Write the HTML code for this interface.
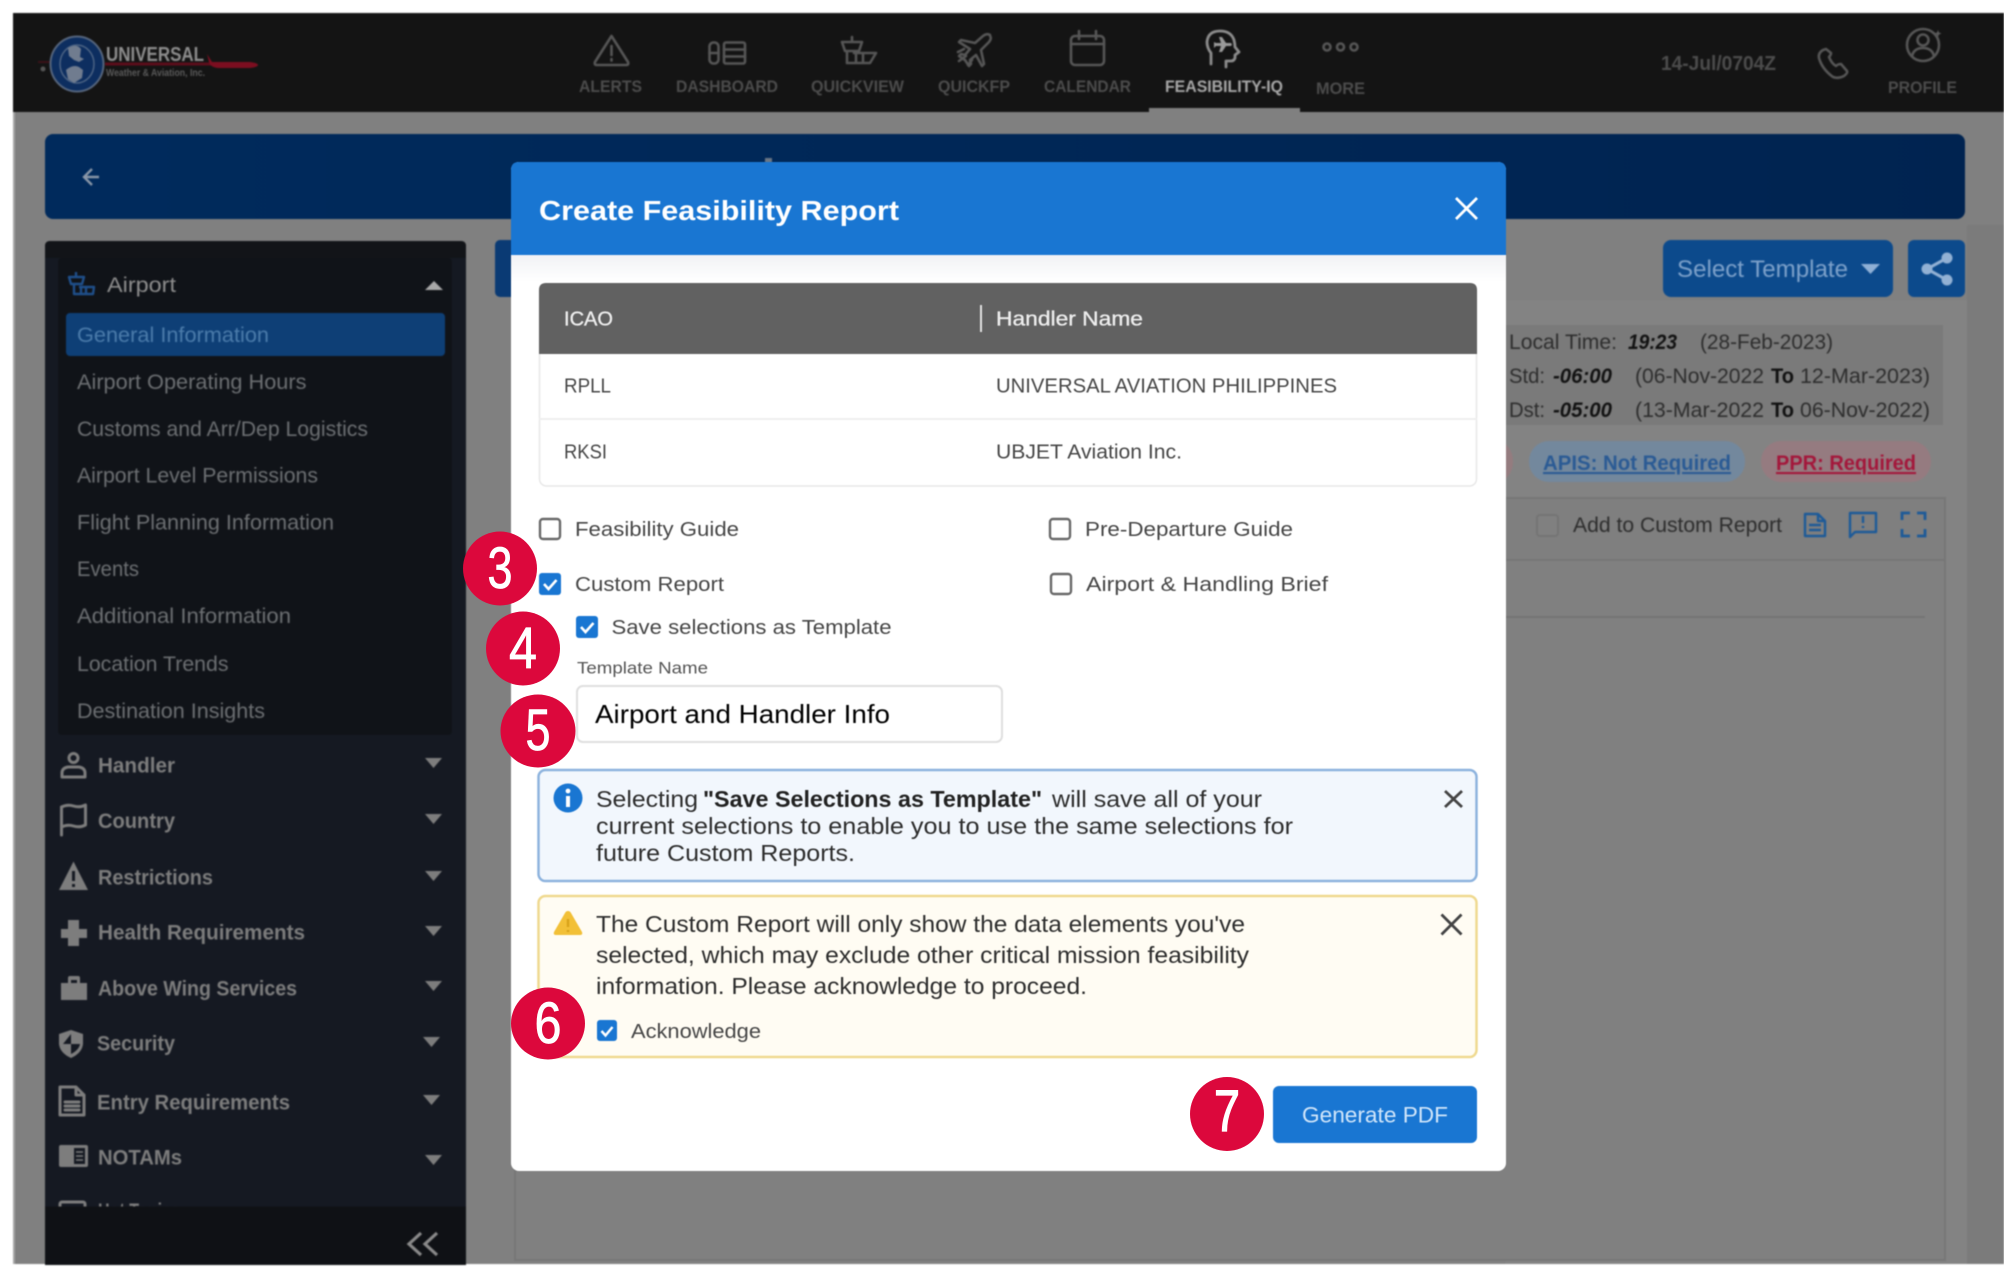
<!DOCTYPE html>
<html lang="en">
<head>
<meta charset="utf-8">
<title>Create Feasibility Report</title>
<style>
html,body{margin:0;padding:0;background:#fff;width:2004px;height:1272px;overflow:hidden}
svg{display:block}
text{font-family:"Liberation Sans",Arial,sans-serif;white-space:pre}
.b1{filter:blur(.9px)}
.b2{filter:blur(.4px)}
.nav{font-size:17px;font-weight:700;fill:#4c4c4c}
.m{font-size:21px;fill:#6d7073}
.s{font-size:21px;fill:#7d7d7d;font-weight:700}
.d{font-size:21px;fill:#2c2c2c}
.db{font-size:21px;fill:#111;font-weight:700;font-style:italic}
.dt{font-size:21px;fill:#111;font-weight:700}
.t{font-size:20px;fill:#474747}
.a{font-size:23px;fill:#2e2e2e}
.n{font-size:58px;fill:#fff;text-anchor:middle;font-family:"Liberation Sans",sans-serif}
.ic{fill:none;stroke:#565656;stroke-width:2.6;stroke-linecap:round;stroke-linejoin:round}
.si{fill:#7d7d7d}
.so{fill:none;stroke:#7d7d7d;stroke-width:3;stroke-linejoin:round;stroke-linecap:round}
</style>
</head>
<body>
<svg xmlns="http://www.w3.org/2000/svg" width="2004" height="1272" viewBox="0 0 2004 1272">
<defs>
<linearGradient id="ban" x1="0" x2="1" y1="0" y2="0"><stop offset="0" stop-color="#002a5c"/><stop offset="1" stop-color="#002350"/></linearGradient>
<linearGradient id="top" x1="0" x2="0" y1="0" y2="1"><stop offset="0" stop-color="#f1f2f5"/><stop offset="1" stop-color="#ffffff"/></linearGradient>
<clipPath id="sc"><rect x="45" y="1100" width="421" height="106.6"/></clipPath>
</defs>

<rect width="2004" height="1272" fill="#fff"/>
<g class="b1">
  <!-- page backdrop -->
  <rect x="13" y="13" width="1991" height="1251" fill="#808080"/>
  <rect x="13" y="13" width="2" height="1251" fill="#a5a5a5"/>
  <rect x="1967" y="225" width="37" height="1039" fill="#7b7b7b"/>
  <rect x="1505" y="300" width="462" height="964" fill="#838383"/>

  <!-- top nav -->
  <rect x="13" y="13" width="1991" height="99" fill="#141414"/>
  <!-- logo -->
  <path d="M38 62h14" stroke="#3a1218" stroke-width="2"/>
  <circle cx="43" cy="69" r="2.5" fill="#555"/>
  <path d="M105 64H230" stroke="#5c0d1b" stroke-width="3"/>
  <path d="M207 54l5 8H250q8 1 8 3t-8 3H218q-8-1-9-6z" fill="#7c0e20"/>
  <ellipse cx="77" cy="64" rx="26.5" ry="27.5" fill="#0d2e60" stroke="#55657d" stroke-width="2"/>
  <ellipse cx="77" cy="64" rx="17" ry="19" fill="none" stroke="#4d6484" stroke-width="1.5"/>
  <path d="M68 48q9-5 13 1l-1 8 4 2-5 3-5-2-5-4zM66 70q7-6 13-3l4 3-1 8-8 5-6-4z" fill="#707c8f"/>
  <text x="106" y="61" font-size="20" font-weight="700" fill="#8d8d8d" textLength="98" lengthAdjust="spacingAndGlyphs">UNIVERSAL</text>
  <text x="106" y="76" font-size="10" font-weight="700" fill="#5a5a5a" textLength="99" lengthAdjust="spacingAndGlyphs">Weather &amp; Aviation, Inc.</text>

  <!-- nav icons -->
  <path class="ic" d="M611.5 36 L628 62q1 3-2 3H597q-3 0-2-3Z"/><path d="M611.5 46v9M611.5 59v1.5" class="ic" stroke-width="3"/>
  <rect class="ic" x="709.5" y="42.5" width="9" height="21" rx="4"/><path class="ic" d="M709.5 53h9"/>
  <rect class="ic" x="724" y="42.5" width="21" height="21" rx="2"/><path class="ic" d="M724 49.5h21M724 56.5h21"/>
  <path class="ic" d="M842 42h20l-3 9h-14zM852 37v5M847 51v12h23l6-10h-22M856 54v9M863 54v9"/>
  <path class="ic" d="M990 35q-3-2-7 1l-8 7-14-3-2 2 11 7-5 6-4-1-2 2 6 4 4 6 2-2-1-4 6-5 6 11 2-2-3-14 8-8q3-4 1-6zM964 49l-6 3M966 56l-7 5M972 60l-4 5"/>
  <rect class="ic" x="1071" y="36" width="33" height="29" rx="4"/><path class="ic" d="M1071 44h33M1079 31v8M1096 31v8"/>
  <path d="M1211 64V53q-4-5-4-11 1-11 13-11 11 0 14 9 1 4 1 7l4 5-4 3v3q-1 3-4 3h-5v6" fill="none" stroke="#8c8c8c" stroke-width="2.8" stroke-linecap="round" stroke-linejoin="round"/>
  <path d="M1216 43h5l-2-6h3l4 6h5l1 1.500-1 1.500h-5l-4 6h-3l2-6h-5l-2 2v-6z" fill="#9a9a9a"/>
  <circle class="ic" cx="1327" cy="47" r="3.500" stroke-width="2.200"/><circle class="ic" cx="1340.500" cy="47" r="3.500" stroke-width="2.200"/><circle class="ic" cx="1354" cy="47" r="3.500" stroke-width="2.200"/>
  <path class="ic" d="M1823 50q-5 3-4 8 3 11 14 19 5 2 11-1 4-3 3-5l-6-7q-3 0-5 2-4-2-7-9 2-2 2-4l-5-4z" stroke="#4a4a4a"/>
  <circle class="ic" cx="1923" cy="45" r="16"/><circle class="ic" cx="1923" cy="40" r="5.500"/><path class="ic" d="M1912 56q2-8 11-8t11 8"/><path d="M1938 30l1 2.500 2.500 1-2.500 1-1 2.500-1-2.500-2.500-1 2.500-1z" fill="#5a5a5a"/>

  <text class="nav" x="579" y="92" textLength="63" lengthAdjust="spacingAndGlyphs">ALERTS</text>
  <text class="nav" x="676" y="92" textLength="102" lengthAdjust="spacingAndGlyphs">DASHBOARD</text>
  <text class="nav" x="811" y="92" textLength="93" lengthAdjust="spacingAndGlyphs">QUICKVIEW</text>
  <text class="nav" x="938" y="92" textLength="72" lengthAdjust="spacingAndGlyphs">QUICKFP</text>
  <text class="nav" x="1044" y="92" textLength="87" lengthAdjust="spacingAndGlyphs">CALENDAR</text>
  <text class="nav" x="1165" y="92" textLength="118" lengthAdjust="spacingAndGlyphs" style="fill:#a8a8a8">FEASIBILITY-IQ</text>
  <text class="nav" x="1316" y="94" textLength="49" lengthAdjust="spacingAndGlyphs">MORE</text>
  <text class="nav" x="1888" y="93" textLength="69" lengthAdjust="spacingAndGlyphs">PROFILE</text>
  <text x="1661" y="70" font-size="20" font-weight="700" fill="#4c4c4c" textLength="115" lengthAdjust="spacingAndGlyphs">14-Jul/0704Z</text>
  <rect x="1149" y="108" width="151" height="5" fill="#808080"/>

  <!-- banner -->
  <rect x="45" y="134" width="1920" height="85" rx="8" fill="url(#ban)"/>
  <rect x="765" y="158" width="7" height="6" fill="#6a7684"/>
  <path d="M99 177H85M92 169l-8 8 8 8" fill="none" stroke="#8a97a8" stroke-width="2.400"/>

  <!-- blue tab behind the modal -->
  <rect x="495" y="240" width="30" height="57" rx="5" fill="#0a3a74"/>

  <!-- main content card -->
  <rect x="515" y="560" width="1430" height="700" fill="#808080" stroke="#767676" stroke-width="2"/>
  <path d="M1505 617H1925" stroke="#747474" stroke-width="2"/>

  <!-- right tools -->
  <rect x="1663" y="240" width="230" height="57" rx="8" fill="#0c4a8c"/>
  <text x="1677" y="277" font-size="24" fill="#7ea2cb" textLength="171" lengthAdjust="spacingAndGlyphs">Select Template</text>
  <path d="M1861 264h19l-9.500 10z" fill="#8fb0d6"/>
  <rect x="1908" y="240" width="57" height="57" rx="6" fill="#0c4a8c"/>
  <g fill="#92b1d4"><circle cx="1947" cy="258" r="5.500"/><circle cx="1927" cy="269" r="5.500"/><circle cx="1947" cy="280" r="5.500"/></g>
  <path d="M1947 258L1927 269L1947 280" fill="none" stroke="#92b1d4" stroke-width="3"/>

  <rect x="1505" y="325" width="438" height="100" fill="#7a7a7a"/>
  <text class="d" x="1509" y="349" textLength="108" lengthAdjust="spacingAndGlyphs">Local Time:</text>
  <text class="db" x="1628" y="349" textLength="49" lengthAdjust="spacingAndGlyphs">19:23</text>
  <text class="d" x="1700" y="349" textLength="133" lengthAdjust="spacingAndGlyphs">(28-Feb-2023)</text>
  <text class="d" x="1509" y="383" textLength="36" lengthAdjust="spacingAndGlyphs">Std:</text>
  <text class="db" x="1553" y="383" textLength="59" lengthAdjust="spacingAndGlyphs">-06:00</text>
  <text class="d" x="1635" y="383" textLength="129" lengthAdjust="spacingAndGlyphs">(06-Nov-2022</text>
  <text class="dt" x="1771" y="383" textLength="23" lengthAdjust="spacingAndGlyphs">To</text>
  <text class="d" x="1800" y="383" textLength="130" lengthAdjust="spacingAndGlyphs">12-Mar-2023)</text>
  <text class="d" x="1509" y="417" textLength="36" lengthAdjust="spacingAndGlyphs">Dst:</text>
  <text class="db" x="1553" y="417" textLength="59" lengthAdjust="spacingAndGlyphs">-05:00</text>
  <text class="d" x="1635" y="417" textLength="129" lengthAdjust="spacingAndGlyphs">(13-Mar-2022</text>
  <text class="dt" x="1771" y="417" textLength="23" lengthAdjust="spacingAndGlyphs">To</text>
  <text class="d" x="1800" y="417" textLength="130" lengthAdjust="spacingAndGlyphs">06-Nov-2022)</text>

  <rect x="1480" y="441" width="33" height="41" rx="20" fill="#947c7f"/>
  <rect x="1529" y="441" width="216" height="41" rx="20" fill="#73889d"/>
  <text x="1543" y="470" font-size="21" font-weight="700" fill="#2a5a94" text-decoration="underline" textLength="188" lengthAdjust="spacingAndGlyphs">APIS: Not Required</text>
  <rect x="1761" y="441" width="170" height="41" rx="20" fill="#957b80"/>
  <text x="1776" y="470" font-size="21" font-weight="700" fill="#a3163a" text-decoration="underline" textLength="140" lengthAdjust="spacingAndGlyphs">PPR: Required</text>

  <rect x="1505" y="498" width="440" height="62" fill="#7f7f7f" stroke="#767676" stroke-width="2"/>
  <rect x="1537" y="515" width="21" height="21" rx="3" fill="#808080" stroke="#747474" stroke-width="2"/>
  <text class="d" x="1573" y="532" textLength="209" lengthAdjust="spacingAndGlyphs">Add to Custom Report</text>
  <path d="M1805 514h13l7 7v15h-20zM1818 514v7h7M1809 525h12M1809 530h12" fill="none" stroke="#1d5a98" stroke-width="2.400" stroke-linejoin="round"/>
  <path d="M1850 513h26v19h-21l-5 5z" fill="none" stroke="#1d5a98" stroke-width="2.400" stroke-linejoin="round"/>
  <path d="M1863 516v7M1863 526v2" stroke="#1d5a98" stroke-width="2.400"/>
  <path d="M1902 520v-7h8M1917 513h8v7M1925 529v7h-8M1910 536h-8v-7" fill="none" stroke="#1d5a98" stroke-width="2.800"/>

  <!-- sidebar -->
  <rect x="45" y="241" width="421" height="1024" rx="5" fill="#151922"/>
  <rect x="58" y="258" width="394" height="477" rx="4" fill="#101318"/>
  <path d="M45 246q0-5 5-5h411q5 0 5 5v12H45z" fill="#121418"/>

  <path d="M69 277h15l-2 7H71zM76 272v5M74 284v10h19l1-7H79M81 288v6M86 288v6" fill="none" stroke="#1f4f8a" stroke-width="2.400" stroke-linejoin="round"/>
  <text x="107" y="292" font-size="21" fill="#8e8e8e" textLength="69" lengthAdjust="spacingAndGlyphs">Airport</text>
  <path d="M425 290l9-9 9 9z" fill="#a8a8a8"/>
  <rect x="66" y="313" width="379" height="43" rx="4" fill="#0e3f76"/>
  <text x="77" y="342" font-size="21" fill="#4c7cab" textLength="192" lengthAdjust="spacingAndGlyphs">General Information</text>
  <text class="m" x="77" y="389" textLength="229.500" lengthAdjust="spacingAndGlyphs">Airport Operating Hours</text>
  <text class="m" x="77" y="436" textLength="291" lengthAdjust="spacingAndGlyphs">Customs and Arr/Dep Logistics</text>
  <text class="m" x="77" y="482.500" textLength="241" lengthAdjust="spacingAndGlyphs">Airport Level Permissions</text>
  <text class="m" x="77" y="529.500" textLength="257" lengthAdjust="spacingAndGlyphs">Flight Planning Information</text>
  <text class="m" x="77" y="576" textLength="62" lengthAdjust="spacingAndGlyphs">Events</text>
  <text class="m" x="77" y="623" textLength="214" lengthAdjust="spacingAndGlyphs">Additional Information</text>
  <text class="m" x="77" y="671" textLength="151.500" lengthAdjust="spacingAndGlyphs">Location Trends</text>
  <text class="m" x="77" y="718" textLength="188" lengthAdjust="spacingAndGlyphs">Destination Insights</text>

  <text class="s" x="98" y="772.500" textLength="77" lengthAdjust="spacingAndGlyphs">Handler</text>
  <text class="s" x="98" y="828" textLength="77" lengthAdjust="spacingAndGlyphs">Country</text>
  <text class="s" x="98" y="884.500" textLength="115" lengthAdjust="spacingAndGlyphs">Restrictions</text>
  <text class="s" x="98" y="939.500" textLength="207" lengthAdjust="spacingAndGlyphs">Health Requirements</text>
  <text class="s" x="98" y="995.500" textLength="199" lengthAdjust="spacingAndGlyphs">Above Wing Services</text>
  <text class="s" x="97" y="1050.500" textLength="78" lengthAdjust="spacingAndGlyphs">Security</text>
  <text class="s" x="97" y="1109.500" textLength="193" lengthAdjust="spacingAndGlyphs">Entry Requirements</text>
  <text class="s" x="98" y="1164.500" textLength="84" lengthAdjust="spacingAndGlyphs">NOTAMs</text>

  <g class="si">
    <path d="M425 758h17l-8.500 10z"/><path d="M425 814h17l-8.500 10z"/><path d="M425 871h17l-8.500 10z"/><path d="M425 926h17l-8.500 10z"/>
    <path d="M425 981h17l-8.500 10z"/><path d="M423 1037h17l-8.500 10z"/><path d="M423 1095h17l-8.500 10z"/><path d="M425 1155h17l-8.500 10z"/>
  </g>
  <!-- sidebar icons -->
  <circle class="so" cx="73.500" cy="758" r="4.500"/><path class="so" d="M62 777v-4q0-5 6-6h11q6 1 6 6v4z"/>
  <path class="so" d="M61.500 835V807M61.500 807q6-3 12-1t12-1v20q-6 3-12 1t-12 1"/>
  <path class="si" d="M73.500 861.500L88 890H59z"/><path d="M73.500 871v10M73.500 884v3" stroke="#151922" stroke-width="3"/>
  <path class="si" d="M68 920h11v9h8v9h-8v8H68v-8h-7v-9h7z"/>
  <path class="si" d="M61 983h26v17H61zM68 983v-5q0-2 2-2h8q2 0 2 2v5h-3v-3h-6v3z"/>
  <path class="si" d="M71 1030l12 4v10q-1 9-12 14-11-5-12-14v-10z"/><path d="M71 1034v10h-8M71 1044h9q-1 6-9 10z" fill="#151922"/>
  <path class="so" d="M60 1087h16l8 8v20H60zM76 1087v8h8M65 1102h14M65 1106h14M65 1110h14" stroke-width="1.800"/>
  <rect class="si" x="59" y="1145" width="29" height="22" rx="2"/><rect x="74" y="1148" width="11" height="16" fill="#151922"/><path d="M76 1152h7M76 1156h7M76 1160h7" stroke="#7d7d7d" stroke-width="1.500"/>
  <g clip-path="url(#sc)">
    <rect class="so" x="60" y="1202" width="25" height="20" rx="2"/>
    <text class="s" x="98" y="1218" textLength="82" lengthAdjust="spacingAndGlyphs">Hot Topics</text>
  </g>
  <rect x="45" y="1206.600" width="421" height="58.400" fill="#0f1115"/>
  <path d="M421 1233l-12 11 12 11M437 1233l-12 11 12 11" fill="none" stroke="#8a8a8a" stroke-width="3.200"/>
</g>

<!-- modal -->
<g class="b2">
  <rect x="511" y="162" width="995" height="1009" rx="8" fill="#fff"/>
  <path d="M511 255v-85q0-8 8-8h979q8 0 8 8v85z" fill="#1976d2"/>
  <rect x="511" y="255" width="995" height="26" fill="url(#top)"/>
  <text x="539" y="220" font-size="28" font-weight="700" fill="#fff" textLength="360" lengthAdjust="spacingAndGlyphs">Create Feasibility Report</text>
  <path d="M1456 198l21 21M1477 198l-21 21" stroke="#fff" stroke-width="2.800" fill="none"/>

  <!-- table -->
  <rect x="539.500" y="284" width="937" height="202" rx="7" fill="#fff" stroke="#e8e8e8" stroke-width="1.500"/>
  <path d="M539 354v-64q0-7 7-7h924q7 0 7 7v64z" fill="#616161"/>
  <path d="M981 305v27" stroke="#e0e0e0" stroke-width="2"/>
  <path d="M539 419h938" stroke="#eeeeee" stroke-width="2"/>
  <text x="564" y="325.500" font-size="20" fill="#ececec" stroke="#ececec" stroke-width=".35" textLength="49" lengthAdjust="spacingAndGlyphs">ICAO</text>
  <text x="996" y="325.500" font-size="20" fill="#ececec" stroke="#ececec" stroke-width=".35" textLength="147" lengthAdjust="spacingAndGlyphs">Handler Name</text>
  <text class="t" x="564" y="392.500" textLength="47" lengthAdjust="spacingAndGlyphs">RPLL</text>
  <text class="t" x="996" y="392.500" textLength="341" lengthAdjust="spacingAndGlyphs">UNIVERSAL AVIATION PHILIPPINES</text>
  <text class="t" x="564" y="458.500" textLength="43" lengthAdjust="spacingAndGlyphs">RKSI</text>
  <text class="t" x="996" y="458.500" textLength="186" lengthAdjust="spacingAndGlyphs">UBJET Aviation Inc.</text>

  <!-- checkboxes -->
  <rect x="540" y="519" width="20" height="20" rx="3" fill="#fff" stroke="#6a6a6a" stroke-width="2.400"/>
  <text class="t" x="575" y="536" textLength="164" lengthAdjust="spacingAndGlyphs">Feasibility Guide</text>
  <rect x="1050" y="519" width="20" height="20" rx="3" fill="#fff" stroke="#6a6a6a" stroke-width="2.400"/>
  <text class="t" x="1085" y="536" textLength="208" lengthAdjust="spacingAndGlyphs">Pre-Departure Guide</text>
  <rect x="539" y="573" width="22" height="22" rx="3" fill="#1976d2"/>
  <path d="M544 584l4.500 5 8-9" fill="none" stroke="#fff" stroke-width="2.600"/>
  <text class="t" x="575" y="591" textLength="149" lengthAdjust="spacingAndGlyphs">Custom Report</text>
  <rect x="1051" y="574" width="20" height="20" rx="3" fill="#fff" stroke="#6a6a6a" stroke-width="2.400"/>
  <text class="t" x="1086" y="591" textLength="242" lengthAdjust="spacingAndGlyphs">Airport &amp; Handling Brief</text>
  <rect x="576" y="616" width="22" height="22" rx="3" fill="#1976d2"/>
  <path d="M581 627l4.500 5 8-9" fill="none" stroke="#fff" stroke-width="2.600"/>
  <text class="t" x="611.500" y="634" textLength="280" lengthAdjust="spacingAndGlyphs">Save selections as Template</text>
  <text x="577" y="673.500" font-size="17" fill="#555" textLength="131" lengthAdjust="spacingAndGlyphs">Template Name</text>
  <rect x="577" y="686" width="425" height="56" rx="6" fill="#fff" stroke="#dfdfdf" stroke-width="2"/>
  <text x="595" y="723" font-size="26" fill="#000" textLength="295" lengthAdjust="spacingAndGlyphs">Airport and Handler Info</text>

  <!-- info alert -->
  <rect x="538.500" y="770" width="938" height="111" rx="7" fill="#f2f7fd" stroke="#8db3de" stroke-width="2.500"/>
  <circle cx="568" cy="798" r="14.500" fill="#1976d2"/>
  <rect x="566" y="796" width="4" height="11" fill="#fff"/><circle cx="568" cy="791" r="2.400" fill="#fff"/>
  <text class="a" x="596" y="807" textLength="102" lengthAdjust="spacingAndGlyphs">Selecting</text>
  <text class="a" x="703" y="807" textLength="339" lengthAdjust="spacingAndGlyphs" style="font-weight:700;fill:#222">"Save Selections as Template"</text>
  <text class="a" x="1052" y="807" textLength="210" lengthAdjust="spacingAndGlyphs">will save all of your</text>
  <text class="a" x="596" y="834" textLength="697" lengthAdjust="spacingAndGlyphs">current selections to enable you to use the same selections for</text>
  <text class="a" x="596" y="861" textLength="259" lengthAdjust="spacingAndGlyphs">future Custom Reports.</text>
  <path d="M1445 791l17 16M1462 791l-17 16" stroke="#444" stroke-width="2.800" fill="none"/>

  <!-- warning alert -->
  <rect x="538.500" y="896" width="938" height="161" rx="7" fill="#fffcf3" stroke="#efd98f" stroke-width="2.500"/>
  <path d="M568 911q2 0 3 2l11 19q1 3-2 3h-24q-3 0-2-3l11-19q1-2 3-2z" fill="#f2c037"/>
  <path d="M568 919v8M568 930v2" stroke="#d8a31a" stroke-width="2.400"/>
  <text class="a" x="596" y="932" textLength="649" lengthAdjust="spacingAndGlyphs">The Custom Report will only show the data elements you've</text>
  <text class="a" x="596" y="963" textLength="653" lengthAdjust="spacingAndGlyphs">selected, which may exclude other critical mission feasibility</text>
  <text class="a" x="596" y="994" textLength="491" lengthAdjust="spacingAndGlyphs">information. Please acknowledge to proceed.</text>
  <path d="M1441.500 914.500l20 20M1461.500 914.500l-20 20" stroke="#444" stroke-width="2.800" fill="none"/>
  <rect x="597" y="1020" width="20" height="21" rx="3" fill="#1976d2"/>
  <path d="M601.500 1031l4 4.500 7-8.500" fill="none" stroke="#fff" stroke-width="2.500"/>
  <text class="t" x="631" y="1038" textLength="130" lengthAdjust="spacingAndGlyphs">Acknowledge</text>

  <!-- button -->
  <rect x="1273" y="1086" width="204" height="57" rx="6" fill="#1976d2"/>
  <text x="1302" y="1122.500" font-size="22" fill="#cfe5fa" textLength="146" lengthAdjust="spacingAndGlyphs">Generate PDF</text>
</g>

<!-- callouts -->
<g fill="#dc083c">
  <ellipse cx="500" cy="568.500" rx="37" ry="37"/>
  <ellipse cx="523" cy="648.500" rx="37" ry="37"/>
  <ellipse cx="538" cy="731" rx="37.500" ry="36.500"/>
  <ellipse cx="548" cy="1023.500" rx="37" ry="36"/>
  <ellipse cx="1227" cy="1114" rx="37" ry="37"/>
</g>
<text class="n" x="500" y="588" textLength="25" lengthAdjust="spacingAndGlyphs" stroke="#fff" stroke-width=".8">3</text>
<text class="n" x="523" y="668" textLength="28" lengthAdjust="spacingAndGlyphs" stroke="#fff" stroke-width=".8">4</text>
<text class="n" x="538" y="750" textLength="25" lengthAdjust="spacingAndGlyphs" stroke="#fff" stroke-width=".8">5</text>
<text class="n" x="548" y="1043" textLength="27" lengthAdjust="spacingAndGlyphs" stroke="#fff" stroke-width=".8">6</text>
<text class="n" x="1227" y="1131" textLength="26" lengthAdjust="spacingAndGlyphs" stroke="#fff" stroke-width="1.200">7</text>
</svg>
</body>
</html>
